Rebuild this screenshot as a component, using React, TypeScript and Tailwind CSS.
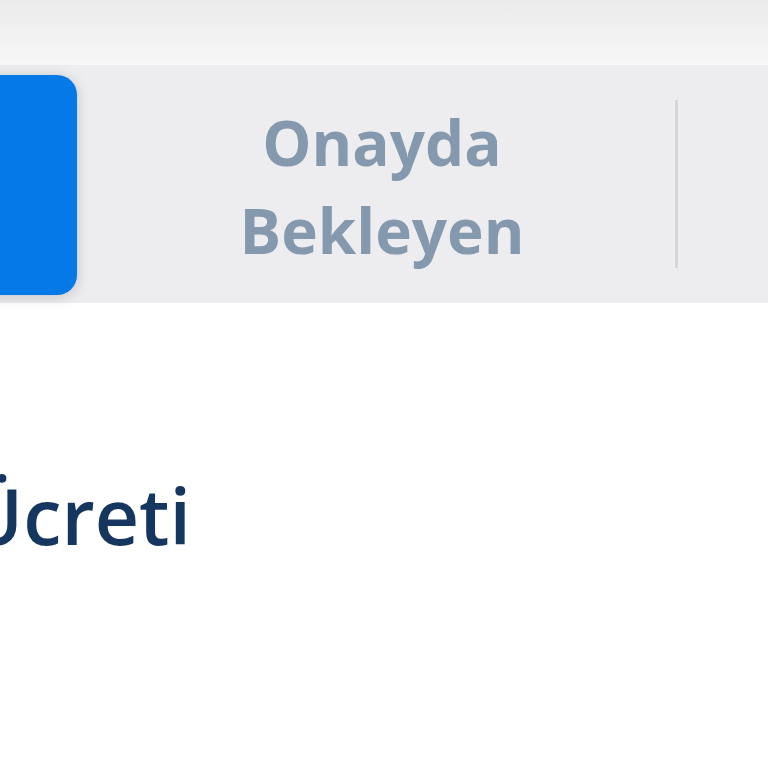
export default function App() {
  return (
    <div className="h-[768px] w-[768px] overflow-hidden bg-white" style={{ fontFamily: '"Open Sans", "Noto Sans", sans-serif' }}>
      {/* status / header strip */}
      <div className="h-[65px] bg-gradient-to-b from-[#ebebeb] to-[#f7f7f7]" />

      {/* tab bar */}
      <div className="flex h-[238px] items-stretch bg-[#ededf0]">
        <div className="-ml-[60px] mt-[10px] mb-[8px] w-[137px] rounded-[20px] bg-[#0679e8] shadow-[0_2px_14px_rgba(0,0,0,0.18)]" />
        <div className="flex flex-1 items-center justify-center pl-[12px] pt-[4px]">
          <div className="text-center text-[62px] font-bold leading-[88px] text-[#8599ae]">
            Onayda
            <br />
            Bekleyen
          </div>
        </div>
        <div className="my-[35px] w-[3px] bg-[#d6d6d9]" />
        <div className="w-[90px]" />
      </div>

      {/* content */}
      <div className="pt-[174px]">
        <div className="-ml-[34px] text-[77px] font-semibold leading-none text-[#15365f]">Ücreti</div>
      </div>
    </div>
  )
}
